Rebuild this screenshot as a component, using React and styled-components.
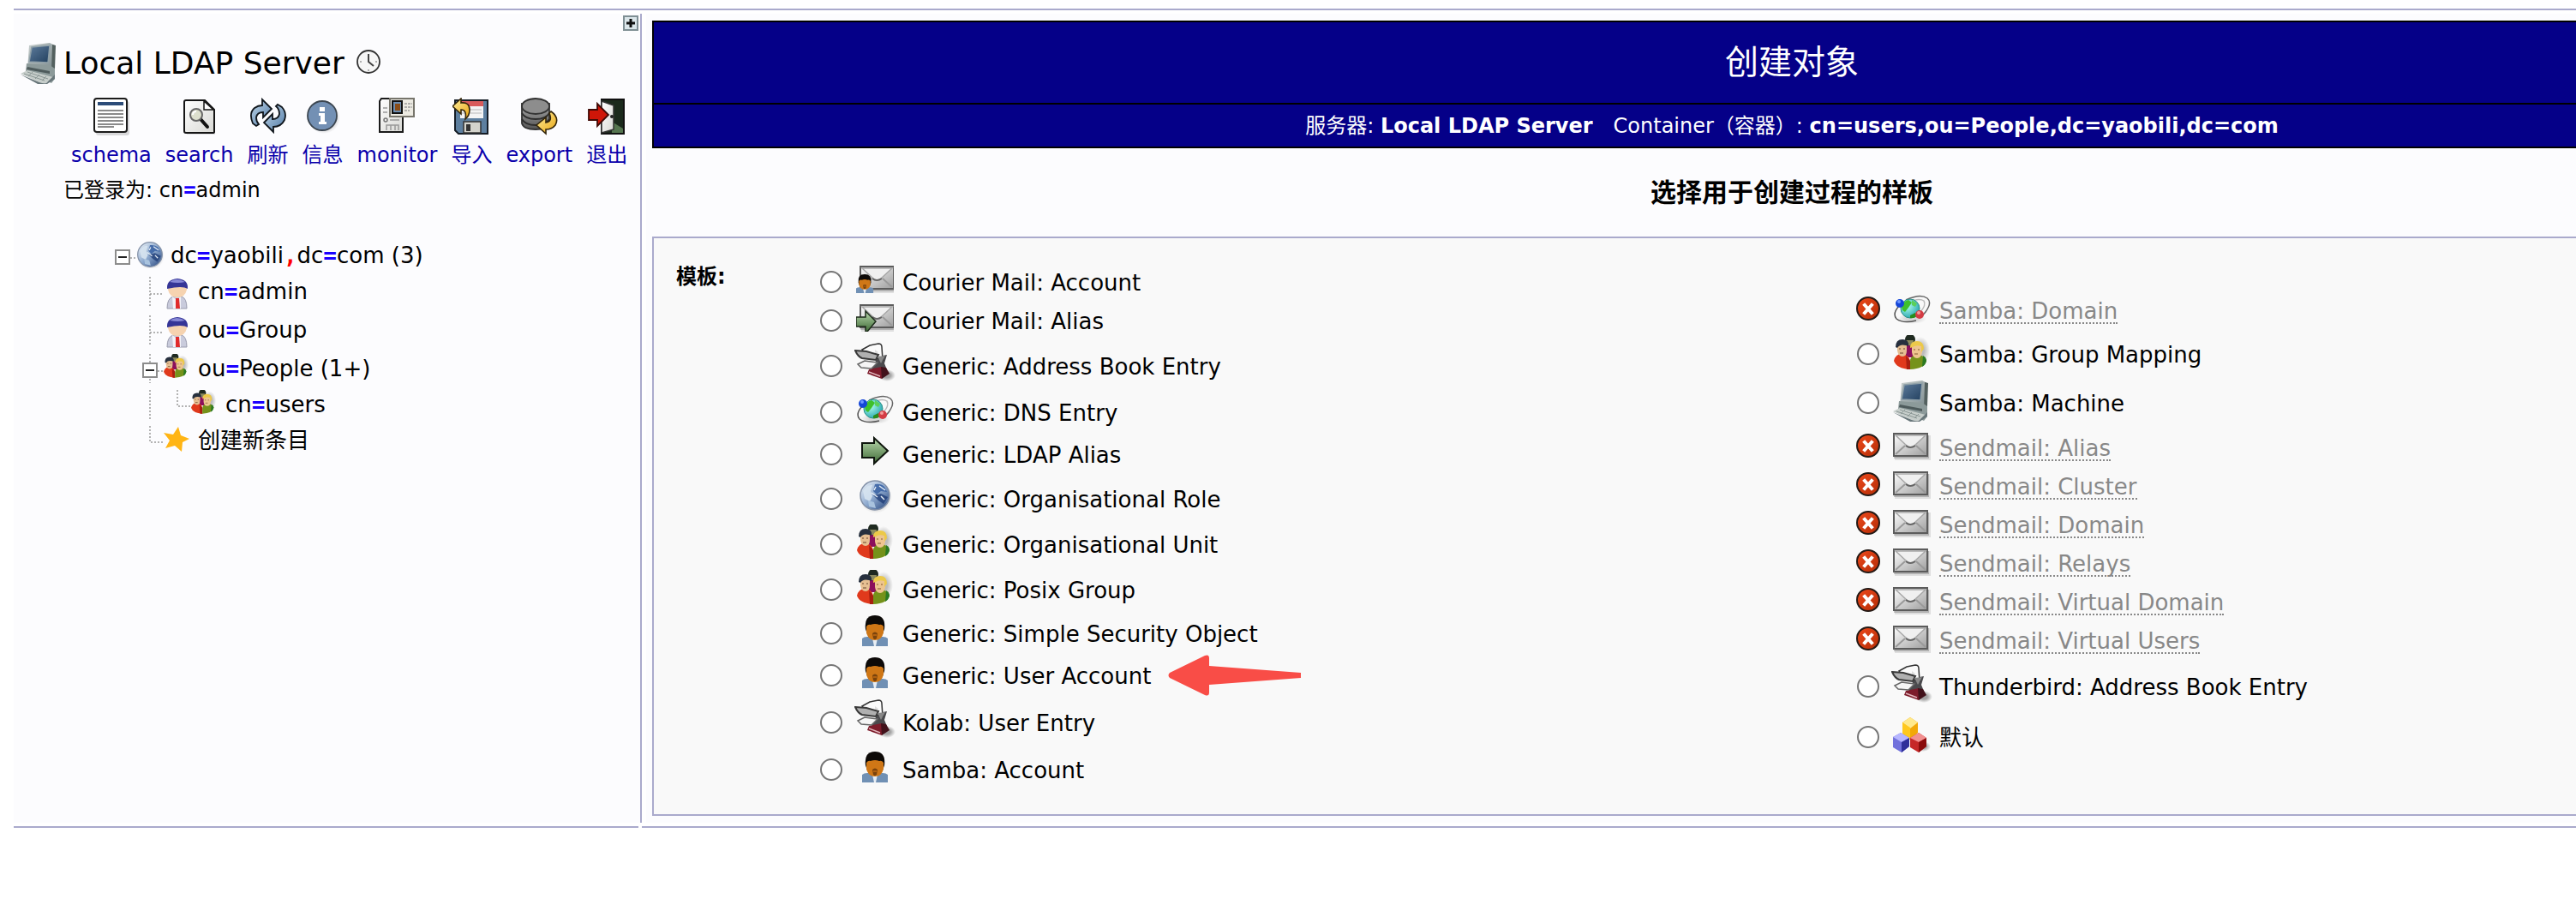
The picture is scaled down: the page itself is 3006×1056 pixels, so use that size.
import React from 'react';
import styled, { createGlobalStyle } from 'styled-components';

const line = '#aaaacc';
const pane = '#fcfcfe';

const GlobalStyle = createGlobalStyle`
  * { box-sizing: border-box; }
  body {
    margin: 0;
    background: #fff;
    color: #000;
    font-family: "DejaVu Sans", Verdana, "Noto Sans CJK SC", sans-serif;
    font-size: 26px;
    line-height: 32px;
    overflow: hidden;
  }
  svg { display: block; flex: none; }
  a { color: inherit; text-decoration: none; }
`;

/* ---------- page frame ---------- */

const Page = styled.div`
  padding: 10px 0 0 16px;
`;

const Rule = styled.div`
  height: 2px;
  background: ${line};
  flex: ${(p) => (p.$side ? '0 0 729px' : '1 0 0')};
`;

const Columns = styled.div`
  display: flex;
  gap: 5px;
  padding: 4px 0;
`;

const BottomRules = styled.div`
  display: flex;
  gap: 4px;
`;

/* ---------- side pane ---------- */

const Sidebar = styled.aside`
  position: relative;
  flex: 0 0 733px;
  padding-top: 34px;
  background: ${pane};
  border-right: 2px solid ${line};
`;

const ExpandButton = styled.button`
  position: absolute;
  top: 2px;
  right: 2px;
  width: 18px;
  height: 18px;
  padding: 0;
  border: 2px solid #7f8f94;
  background: #dbe6ea;
`;

const ServerHead = styled.h1`
  display: flex;
  align-items: center;
  gap: 8px;
  margin: 0 0 16px;
  padding-left: 8px;
  font-size: 36px;
  line-height: 48px;
  font-weight: 400;
`;

const ServerName = styled.span`
  padding-right: 6px;
`;

const Toolbar = styled.nav`
  display: flex;
  gap: 16px;
  padding-left: 67px;
`;

const Tool = styled.a`
  display: flex;
  flex-direction: column;
  align-items: center;
  gap: 8px;
  font-size: 24px;
  line-height: 30px;
  color: #0a00ab;
`;

const Login = styled.p`
  margin: 11px 0 44px;
  padding-left: 58px;
  font-size: 24px;
  line-height: 30px;
`;

const Mark = styled.b`
  font-family: "DejaVu Sans Mono", monospace;
  color: ${(p) => (p.$comma ? '#ff0000' : '#1a00ff')};
`;

const Tree = styled.ul`
  margin: 0;
  padding: 0 0 0 111px;
  list-style: none;
`;

const TreeRow = styled.li`
  display: flex;
  align-items: flex-start;
  height: ${(p) => (p.$tall ? 45 : 42)}px;
`;

const TreeLink = styled.a`
  padding: 1px 0 0 8px;
`;

/* ---------- main pane ---------- */

const Main = styled.main`
  flex: 1 0 2675px;
  padding: 8px 8px 8px 7px;
  background: ${pane};
`;

const Banner = styled.header`
  border: 2px solid #000;
  background: #050088;
  color: #fff;
  text-align: center;
`;

const BannerTitle = styled.h2`
  margin: 0;
  padding: 23px 0;
  font-size: 39px;
  line-height: 48px;
  font-weight: 400;
`;

const BannerPath = styled.p`
  margin: 0;
  padding: 10px 0 9px;
  border-top: 2px solid #000;
  font-size: 24px;
  line-height: 30px;
`;

const Server = styled.b`
  margin-right: 24px;
`;

const Subtitle = styled.h3`
  margin: 0;
  padding: 32px 0 31px;
  font-size: 30px;
  line-height: 40px;
  text-align: center;
`;

const Panel = styled.form`
  display: grid;
  grid-template-columns: 166px 1fr 1fr;
  padding: 28px 44px 28px 26px;
  background: #f9f9f9;
  border: 2px solid ${line};
`;

const PanelLabel = styled.strong`
  padding-top: 1px;
  font-size: 24px;
  line-height: 32px;
`;

const Choices = styled.div`
  display: flex;
  flex-direction: column;
  justify-content: center;
`;

const Choice = styled.label`
  display: flex;
  align-items: center;
`;

const Lead = styled.span`
  display: flex;
  justify-content: center;
  width: 30px;
  margin-right: 12px;
`;

const Radio = styled.input`
  appearance: none;
  width: 26px;
  height: 26px;
  margin: 0;
  border: 2px solid #767676;
  border-radius: 50%;
  background: #fff;
  &:checked { border-width: 8px; border-color: #0075ff; }
`;

const IconCell = styled.span`
  display: flex;
  justify-content: center;
  width: 48px;
  margin-right: 8px;
  padding: 4px 0 9px;
`;

const ChoiceText = styled.span`
  padding-top: 2px;
  line-height: 26px;
  ${(p) => p.$off && 'color: #888; border-bottom: 2px dotted #888;'}
`;

const Pointer = styled.svg`
  margin-left: 20px;
`;

/* ---------- drawings ---------- */

const stops = {
  env: ['#ffffff', '#9d9d9d'],
  green: ['#b9d8ae', '#3f6b36'],
  world: ['#f4f8fb', '#8fabd0', '#23427a'],
  screen: ['#5e7c9c', '#22405f'],
  red: ['#f04a1c', '#b22c06'],
  blue: ['#c3d8ea', '#4f7aa6'],
  grey: ['#a8a8a8', '#555555'],
  gold: ['#fff0a0', '#e8a410'],
  paper: ['#ffffff', '#d8d8d4'],
  case: ['#c9d0cf', '#77868a'],
};

const Defs = () => (
  <svg width="0" height="0" style={{ position: 'absolute' }} aria-hidden="true">
    <defs>
      {Object.entries(stops).map(([id, cs]) => (
        <linearGradient key={id} id={id} x1="0" y1="0" x2={id === 'grey' || id === 'green' ? 0 : 1} y2="1">
          {cs.map((c, i) => (
            <stop key={c} offset={i / (cs.length - 1)} stopColor={c} />
          ))}
        </linearGradient>
      ))}
      <radialGradient id="sea" cx=".35" cy=".35" r=".7">
        <stop offset="0" stopColor="#b4fff0" />
        <stop offset="1" stopColor="#28a8b0" />
      </radialGradient>
      <radialGradient id="shade">
        <stop offset=".4" stopColor="#000" stopOpacity=".35" />
        <stop offset="1" stopColor="#000" stopOpacity="0" />
      </radialGradient>
    </defs>
  </svg>
);

const Svg = ({ w, h, vb, children }) => (
  <svg width={w} height={h} viewBox={vb || `0 0 ${w} ${h}`} aria-hidden="true">{children}</svg>
);

const Envelope = () => (
  <g>
    <rect x="2" y="3" width="42" height="29" fill="#000" opacity=".1" />
    <rect x="1" y="3" width="41" height="27" fill="#000" opacity=".2" />
    <rect x="1" y="1" width="39" height="26" fill="url(#env)" stroke="#5c5c5c" strokeWidth="2" />
    <path d="M3 25L14 15M38 25L27 15" stroke="#9a9a9a" strokeWidth="2" fill="none" />
    <path d="M3 3L16 15Q20 19 25 15L38 3z" fill="#f0f0f0" stroke="#a8a8a8" strokeWidth="1.5" />
    <path d="M15 15Q20 19 26 15" stroke="#666" strokeWidth="2" fill="none" />
  </g>
);

const Man = () => (
  <g>
    <path d="M0 36V27Q2 25 6 25H24Q28 25 30 27V36z" fill="#7090b4" />
    <path d="M12 27h6l-2 9h-2z" fill="#e8eef4" />
    <path d="M4 16Q2 0 15 0T26 16L24 22H6z" fill="#0d0a08" />
    <path d="M5 13Q7 10 10 11Q15 9 20 11Q23 10 25 13V20Q23 29 15 29T5 20z" fill="#cf7716" />
    <path d="M12 21Q15 18 18 21L17 27Q15 29 13 27z" fill="#7a430c" />
    <path d="M13 22h4v2h-4z" fill="#b0600f" />
  </g>
);

const People = () => (
  <g>
    <ellipse cx="32" cy="18" rx="11" ry="16" fill="url(#shade)" opacity=".7" />
    <circle cx="20" cy="5" r="6" fill="#1f2a20" />
    <path d="M15 6h9l-1 6h-6z" fill="#8b8a5e" />
    <path d="M15 12h10v14H15z" fill="#8c0f5c" />
    <path d="M1 30Q3 22 10 22Q20 23 20 32V40Q4 39 1 30z" fill="#e0391c" />
    <path d="M15 24l5 6v10h-4z" fill="#a81f10" />
    <path d="M20 31Q20 23 29 23Q38 24 39 30Q37 39 20 40z" fill="#75921a" />
    <path d="M35 24Q39 26 39 30Q38 35 34 37z" fill="#2b7a22" />
    <path d="M5 10h11v8q0 7-5 7T5 18z" fill="#e6bf92" />
    <path d="M3 14Q3 5 11 5T18 13L15 12Q8 10 5 15z" fill="#27303e" />
    <path d="M7 16h2M12 16h2M8 21h4" stroke="#6b4630" strokeWidth="1" />
    <path d="M22 12h12v8q-1 7-6 7t-6-7z" fill="#eec58f" />
    <path d="M20 15Q20 7 28 7T36 16L33 20V13Q27 11 23 14z" fill="#ecc949" />
    <path d="M24 17h2M29 17h2M25 22h4" stroke="#85592f" strokeWidth="1" />
  </g>
);

const World = () => (
  <g>
    <circle cx="21" cy="21" r="19" fill="url(#shade)" opacity=".8" />
    <circle cx="20" cy="19" r="17" fill="url(#world)" stroke="#8391a8" strokeWidth="1.5" />
    <path d="M20 6Q27 5 31 9L34 15L27 14L22 18L18 14z" fill="#3c64a4" opacity=".9" />
    <path d="M18 19L27 17L35 21L30 29L24 25z" fill="#1c3a74" opacity=".75" />
    <path d="M6 14Q11 6 17 7L15 14L17 20L14 26L8 23z" fill="#d6e3f0" opacity=".9" />
    <path d="M12 25L19 27L21 34L13 32z" fill="#a9c3de" />
    <path d="M25 8L32 13M16 16L23 21M21 9L19 13M27 20L31 24" stroke="#e6eef6" strokeWidth="1.5" />
  </g>
);

const Machine = () => (
  <g>
    <path d="M10 3L34 0L40 3V28L34 36L8 31z" fill="url(#case)" />
    <path d="M37 2L41 3L40 30L36 34z" fill="#53605f" />
    <path d="M13 5L34 3L32 23L10 22z" fill="url(#screen)" stroke="#8fa0a8" strokeWidth="1.5" />
    <path d="M7 24L34 26L40 30V42L36 47L6 33z" fill="#8c9a9a" />
    <path d="M8 28L34 33V36L7 31z" fill="#4e5b5c" />
    <path d="M0 36L8 32L38 40L30 47Q26 48 22 46z" fill="#c6cdca" />
    <path d="M4 36L28 44M8 34L32 42M9 39L14 34M17 42L22 37M25 44L30 39" stroke="#8c9896" strokeWidth="1" />
    <path d="M0 37L22 46Q27 48 30 47L40 37V42L31 48L20 48z" fill="#68767a" />
  </g>
);

const icons = {
  mail: () => <Svg w={44} h={32}><Envelope /></Svg>,
  mailMan: () => (
    <Svg w={44} h={32}>
      <g transform="translate(4 0)"><Envelope /></g>
      <g transform="translate(0 10) scale(.67 .61)"><Man /></g>
    </Svg>
  ),
  mailArrow: () => (
    <Svg w={44} h={32}>
      <g transform="translate(4 0)"><Envelope /></g>
      <path d="M0 15H11V8L23 20L13 32H11V26H0z" fill="url(#green)" stroke="#1c2a1a" strokeWidth="1.5" />
    </Svg>
  ),
  book: () => (
    <Svg w={48} h={48}>
      <ellipse cx="38" cy="38" rx="10" ry="7" fill="url(#shade)" />
      <path d="M28 16L38 14L35 24L39 34L30 40L19 36L22 26z" fill="#4a4a4d" />
      <path d="M17 31L32 28L38 33L32 42L15 36z" fill="#7d1c2b" />
      <path d="M31 28L37 29L41 36L32 42z" fill="#42121b" />
      <path d="M17 34L30 39" stroke="#e2b6bc" strokeWidth="1.5" />
      <path d="M9 8L18 3L28 1Q32 1 32 5L33 20L14 14z" fill="#fafafa" stroke="#333" strokeWidth="1.5" />
      <path d="M24 8l4 3-4 3" fill="#ddd" />
      <path d="M1 9L14 10L28 14L25 20L9 18Q4 16 1 9z" fill="#b0b0b0" stroke="#3a3a3a" strokeWidth="2" />
      <path d="M4 25L12 21L27 23L20 30L8 29z" fill="#f5f5f5" stroke="#666" strokeWidth="1.5" />
      <path d="M27 16L36 15L31 24z" fill="#888" />
    </Svg>
  ),
  dns: () => (
    <Svg w={44} h={34}>
      <ellipse cx="22" cy="28" rx="17" ry="6" fill="url(#shade)" opacity=".4" />
      <path d="M7 13Q-1 22 4 28Q12 34 27 30" fill="none" stroke="#555" strokeWidth="1.5" />
      <path d="M15 6Q32 -2 40 4Q46 9 38 20Q35 24 31 27" fill="none" stroke="#666" strokeWidth="1.5" />
      <path d="M18 9Q30 3 36 7Q39 12 32 20" fill="none" stroke="#bbb" strokeWidth="1.5" />
      <circle cx="20" cy="16" r="11" fill="url(#sea)" stroke="#2a8f86" />
      <path d="M10 14Q12 7 18 6L22 9L18 15L14 20L11 18z" fill="#3fc02c" />
      <path d="M22 6L28 10L26 14L22 12z" fill="#5ad05a" />
      <path d="M20 24L26 21L28 25Q24 28 20 27z" fill="#2a8c1c" />
      <circle cx="8" cy="10" r="5" fill="#1446d8" />
      <circle cx="7" cy="8" r="2" fill="#6d96ff" />
      <circle cx="31" cy="23" r="5" fill="#d43c44" />
      <circle cx="30" cy="21" r="2" fill="#f39a9a" />
    </Svg>
  ),
  arrow: () => (
    <Svg w={34} h={38}>
      <path d="M2 9H16V3L32 18L16 33V26H2z" fill="url(#green)" stroke="#0f160e" strokeWidth="2" />
    </Svg>
  ),
  world: () => <Svg w={40} h={40}><World /></Svg>,
  people: () => <Svg w={44} h={40}><People /></Svg>,
  man: () => <Svg w={30} h={36}><Man /></Svg>,
  machine: () => <Svg w={44} h={48}><Machine /></Svg>,
  cubes: () => (
    <Svg w={44} h={44}>
      <ellipse cx="35" cy="35" rx="9" ry="6" fill="url(#shade)" />
      <path d="M11 7L20 1L29 7V19L20 27L11 20z" fill="#f2a808" />
      <path d="M11 7L20 1L29 7L20 14z" fill="#ffe98c" />
      <path d="M11 7L20 13V27L11 20z" fill="#ffc81e" />
      <path d="M0 24L9 19L19 25V35L10 42L0 36z" fill="#7272dc" />
      <path d="M0 24L9 19L19 25L10 30z" fill="#b6b6ff" />
      <path d="M10 30L19 25V35L10 42z" fill="#30309a" />
      <path d="M20 25L30 19L39 25V35L30 42L20 36z" fill="#c62828" />
      <path d="M20 25L30 19L39 25L30 30z" fill="#f29090" />
      <path d="M30 30L39 25V35L30 42z" fill="#8a0c0c" />
    </Svg>
  ),
};

const ErrorIcon = () => (
  <Svg w={28} h={34}>
    <circle cx="14" cy="14" r="13" fill="url(#red)" stroke="#241a16" strokeWidth="2" />
    <path d="M10 10L18 19M18 10L10 19" stroke="#fff" strokeWidth="4" strokeLinecap="square" />
  </Svg>
);

const toolIcons = {
  schema: () => (
    <Svg w={44} h={44}>
      <rect x="4" y="4" width="39" height="40" rx="3" fill="#000" opacity=".14" />
      <rect x="2" y="1" width="38" height="39" rx="3" fill="#fff" stroke="#1b1b1b" strokeWidth="2" />
      <path d="M6 7H36" stroke="#2c4c78" strokeWidth="4" />
      <path d="M6 15H36M6 19H36M6 23H36M6 27H36M6 31H36M6 34H25" stroke="#8a8a8a" strokeWidth="2" />
    </Svg>
  ),
  search: () => (
    <Svg w={44} h={44}>
      <path d="M7 5H28L40 17V43H7z" fill="#000" opacity=".1" />
      <path d="M6 3H28L39 14V40Q39 41 37 41H6Q4 41 4 39V5Q4 3 6 3z" fill="url(#paper)" stroke="#151515" strokeWidth="2" />
      <path d="M27 4V14H38z" fill="#fff" stroke="#151515" strokeWidth="1.5" />
      <path d="M23 25L31 34" stroke="#111" strokeWidth="4" strokeLinecap="round" />
      <circle cx="18" cy="20" r="7" fill="#dde0cd" stroke="#666" strokeWidth="2" />
      <path d="M14 20Q14 16 18 16" stroke="#fff" strokeWidth="2" fill="none" />
    </Svg>
  ),
  refresh: () => (
    <Svg w={44} h={44}>
      <path d="M4 30Q-1 18 6 12Q10 9 15 9V2L26 13L16 23V17Q9 17 8 23Q8 28 11 31L8 33z" fill="url(#blue)" stroke="#10161c" strokeWidth="1.8" />
      <path d="M38 11Q44 18 41 26Q37 34 28 34V40L17 29L27 19V25Q34 25 35 19Q35 13 31 10L33 8z" fill="url(#blue)" stroke="#10161c" strokeWidth="1.8" />
    </Svg>
  ),
  info: () => (
    <Svg w={44} h={44}>
      <circle cx="23" cy="23" r="19" fill="url(#shade)" />
      <circle cx="21" cy="21" r="17" fill="#7390b4" stroke="#3c4650" strokeWidth="1.8" />
      <path d="M18 11h6v5h-6zM17 18h7v10h2v3h-9v-3h2v-7h-2z" fill="#fff" />
    </Svg>
  ),
  monitor: () => (
    <Svg w={44} h={44}>
      <path d="M4 1H29V40H2V4z" fill="url(#paper)" stroke="#1b1b1b" strokeWidth="2" />
      <circle cx="9" cy="26" r="2" fill="none" stroke="#777" strokeWidth="1.5" />
      <path d="M14 26H25M6 12H11M6 17H11M10 38V32H24V38M15 32V38M20 32V38" stroke="#999" strokeWidth="1.5" fill="none" />
      <rect x="14" y="1" width="28" height="21" fill="#eceae2" stroke="#77756c" strokeWidth="2" />
      <rect x="17" y="4" width="11" height="14" fill="#6d8db0" stroke="#111" strokeWidth="2" />
      <rect x="20" y="7" width="6" height="8" fill="#8a4d18" />
      <path d="M31 7H40M31 11H40M31 15H37" stroke="#999" strokeWidth="1.5" strokeDasharray="3 1" />
    </Svg>
  ),
  import: () => (
    <Svg w={44} h={44}>
      <path d="M3 3H41V42H7L3 38z" fill="#5d7f9f" stroke="#151d26" strokeWidth="2" />
      <rect x="9" y="4" width="27" height="20" fill="#f4f4f4" />
      <rect x="9" y="4" width="27" height="6" fill="#d95b5b" />
      <path d="M11 14H34M11 18H34" stroke="#ccc" strokeWidth="1.5" />
      <rect x="13" y="28" width="20" height="13" fill="#d3d3cc" stroke="#333" strokeWidth="1.5" />
      <rect x="16" y="31" width="5" height="8" fill="#333" />
      <path d="M0 10L10 1V6Q20 5 20 14Q20 21 15 25Q17 14 10 14V19z" fill="url(#gold)" stroke="#33250a" strokeWidth="1.6" />
    </Svg>
  ),
  export: () => (
    <Svg w={44} h={44}>
      <path d="M2 7V30Q4 37 18 37T34 30V7z" fill="url(#grey)" stroke="#333" strokeWidth="1.8" />
      <path d="M2 18Q6 25 18 25T34 18M2 25Q6 32 18 32T34 25" fill="none" stroke="#2d2d2d" strokeWidth="1.8" />
      <ellipse cx="18" cy="10" rx="16" ry="9" fill="#8d8d8d" stroke="#333" strokeWidth="1.8" />
      <path d="M36 16Q46 23 41 32Q37 37 30 37V42L19 32L30 23V29Q38 28 34 18z" fill="url(#gold)" stroke="#33250a" strokeWidth="1.6" />
    </Svg>
  ),
  logout: () => (
    <Svg w={44} h={44}>
      <rect x="16" y="2" width="26" height="40" fill="#1b2a1c" stroke="#111" strokeWidth="2" />
      <path d="M28 28L41 36V41H28z" fill="#55754f" />
      <path d="M16 4L30 9V37L16 41z" fill="url(#paper)" stroke="#333" strokeWidth="1.5" />
      <circle cx="28" cy="22" r="2" fill="#222" />
      <path d="M1 14H11V7L24 20L11 33V26H1z" fill="#cf1608" stroke="#400a06" strokeWidth="1.8" />
    </Svg>
  ),
};

const Clock = () => (
  <Svg w={28} h={32}>
    <circle cx="14" cy="14" r="13" fill="#f6f6f6" stroke="#333" strokeWidth="1.8" />
    <path d="M14 5V14L20 19" fill="none" stroke="#444" strokeWidth="2" />
    <path d="M4 14H6M22 14H24M13 24H15" stroke="#999" strokeWidth="1.5" />
  </Svg>
);

/* Dotted connectors of the tree, one 32px cell for each level. */
const branches = {
  open: 'M25 20H32',
  tee: 'M16 0V34M16 20H32',
  teeOpen: 'M16 0V10M16 29V34M25 20H32',
  bar: 'M16 0V34',
  end: 'M16 0V19H32',
  none: '',
};

const Branch = ({ kind }) => (
  <Svg w={32} h={34}>
    <path d={branches[kind]} fill="none" stroke="#9a9a9a" strokeWidth="1.5" strokeDasharray="2 2" />
    {kind.toLowerCase().includes('open') && (
      <g>
        <rect x="8" y="11" width="16" height="16" fill="#fff" stroke="#8c8c8c" strokeWidth="2" />
        <path d="M11 19H21" stroke="#222" strokeWidth="2" />
      </g>
    )}
  </Svg>
);

const treeIcons = {
  world: () => <Svg w={32} h={32} vb="1 0 38 38"><World /></Svg>,
  people: () => <Svg w={32} h={32} vb="1 0 46 46"><People /></Svg>,
  person: () => (
    <Svg w={32} h={40}>
      <path d="M4 37Q4 25 11 23H21Q27 25 27 37z" fill="#c9cbdc" stroke="#9a9cae" strokeWidth="1" />
      <path d="M10 23L15 27L20 23V37H11z" fill="#f2f2f8" />
      <path d="M14 25h4l1 12h-5z" fill="#e02b2b" />
      <path d="M5 10H27V15Q25 24 16 24T5 15z" fill="#f6d3b0" />
      <path d="M4 14Q3 3 16 2Q29 3 28 14Q22 10 4 14z" fill="#353597" />
      <path d="M7 6Q15 0 25 6Q17 8 7 6z" fill="#8788d6" />
    </Svg>
  ),
  star: () => (
    <Svg w={32} h={32}>
      <path d="M17 1L20 11L30 15L22 19L21 30L13 23L2 26L7 17L0 8L11 10z" fill="#ffb515" />
    </Svg>
  ),
};

/* ---------- data ---------- */

const tools = [
  ['schema', 'schema'],
  ['search', 'search'],
  ['refresh', '刷新'],
  ['info', '信息'],
  ['monitor', 'monitor'],
  ['import', '导入'],
  ['export', 'export'],
  ['logout', '退出'],
];

const nodes = [
  { cells: ['open'], icon: 'world', text: 'dc=yaobili,dc=com (3)' },
  { cells: ['none', 'tee'], icon: 'person', text: 'cn=admin' },
  { cells: ['none', 'tee'], icon: 'person', text: 'ou=Group' },
  { cells: ['none', 'teeOpen'], icon: 'people', text: 'ou=People (1+)' },
  { cells: ['none', 'bar', 'end'], icon: 'people', text: 'cn=users' },
  { cells: ['none', 'end'], icon: 'star', text: '创建新条目' },
];

const leftChoices = [
  { icon: 'mailMan', text: 'Courier Mail: Account' },
  { icon: 'mailArrow', text: 'Courier Mail: Alias' },
  { icon: 'book', text: 'Generic: Address Book Entry' },
  { icon: 'dns', text: 'Generic: DNS Entry' },
  { icon: 'arrow', text: 'Generic: LDAP Alias' },
  { icon: 'world', text: 'Generic: Organisational Role' },
  { icon: 'people', text: 'Generic: Organisational Unit' },
  { icon: 'people', text: 'Generic: Posix Group' },
  { icon: 'man', text: 'Generic: Simple Security Object' },
  { icon: 'man', text: 'Generic: User Account', pointed: true },
  { icon: 'book', text: 'Kolab: User Entry' },
  { icon: 'man', text: 'Samba: Account' },
];

const rightChoices = [
  { icon: 'dns', text: 'Samba: Domain', off: true },
  { icon: 'people', text: 'Samba: Group Mapping' },
  { icon: 'machine', text: 'Samba: Machine' },
  { icon: 'mail', text: 'Sendmail: Alias', off: true },
  { icon: 'mail', text: 'Sendmail: Cluster', off: true },
  { icon: 'mail', text: 'Sendmail: Domain', off: true },
  { icon: 'mail', text: 'Sendmail: Relays', off: true },
  { icon: 'mail', text: 'Sendmail: Virtual Domain', off: true },
  { icon: 'mail', text: 'Sendmail: Virtual Users', off: true },
  { icon: 'book', text: 'Thunderbird: Address Book Entry' },
  { icon: 'cubes', text: '默认' },
];

/* ---------- parts ---------- */

const Dn = ({ text }) =>
  text.split(/([=,])/).map((part, i) =>
    part === '=' || part === ',' ? <Mark key={i} $comma={part === ','}>{part}</Mark> : part
  );

const Template = ({ item }) => {
  const Icon = icons[item.icon];
  return (
    <Choice as={item.off ? 'div' : 'label'}>
      <Lead>{item.off ? <ErrorIcon /> : <Radio type="radio" name="template" value={item.text} />}</Lead>
      <IconCell><Icon /></IconCell>
      <ChoiceText $off={item.off}>{item.text}</ChoiceText>
      {item.pointed && (
        <Pointer width="156" height="48" viewBox="0 0 156 48" aria-hidden="true">
          <path d="M2 21L43 1Q48 -1 48 4V13L155 21V27L48 35V44Q48 49 43 47L2 27Q-1 24 2 21z" fill="#f94d47" />
        </Pointer>
      )}
    </Choice>
  );
};

export default function App() {
  return (
    <Page>
      <GlobalStyle />
      <Defs />
      <Rule />
      <Columns>
        <Sidebar>
          <ExpandButton type="button" aria-label="expand">
            <Svg w={14} h={14}><path d="M7 2V12M2 7H12" stroke="#111" strokeWidth="3" /></Svg>
          </ExpandButton>
          <ServerHead>
            <Svg w={42} h={48}><Machine /></Svg>
            <ServerName>Local LDAP Server</ServerName>
            <Clock />
          </ServerHead>
          <Toolbar>
            {tools.map(([key, label]) => {
              const Icon = toolIcons[key];
              return <Tool key={key} href="#"><Icon />{label}</Tool>;
            })}
          </Toolbar>
          <Login>已登录为: <Dn text="cn=admin" /></Login>
          <Tree>
            {nodes.map((n) => {
              const Icon = treeIcons[n.icon];
              return (
                <TreeRow key={n.text} $tall={n.icon === 'person'}>
                  {n.cells.map((c, i) => <Branch key={i} kind={c} />)}
                  <Icon />
                  <TreeLink href="#"><Dn text={n.text} /></TreeLink>
                </TreeRow>
              );
            })}
          </Tree>
        </Sidebar>
        <Main>
          <Banner>
            <BannerTitle>创建对象</BannerTitle>
            <BannerPath>
              服务器: <Server>Local LDAP Server</Server>
              Container（容器）: <b>cn=users,ou=People,dc=yaobili,dc=com</b>
            </BannerPath>
          </Banner>
          <Subtitle>选择用于创建过程的样板</Subtitle>
          <Panel>
            <PanelLabel>模板:</PanelLabel>
            <Choices>{leftChoices.map((c) => <Template key={c.text} item={c} />)}</Choices>
            <Choices>{rightChoices.map((c) => <Template key={c.text} item={c} />)}</Choices>
          </Panel>
        </Main>
      </Columns>
      <BottomRules><Rule $side /><Rule /></BottomRules>
    </Page>
  );
}
